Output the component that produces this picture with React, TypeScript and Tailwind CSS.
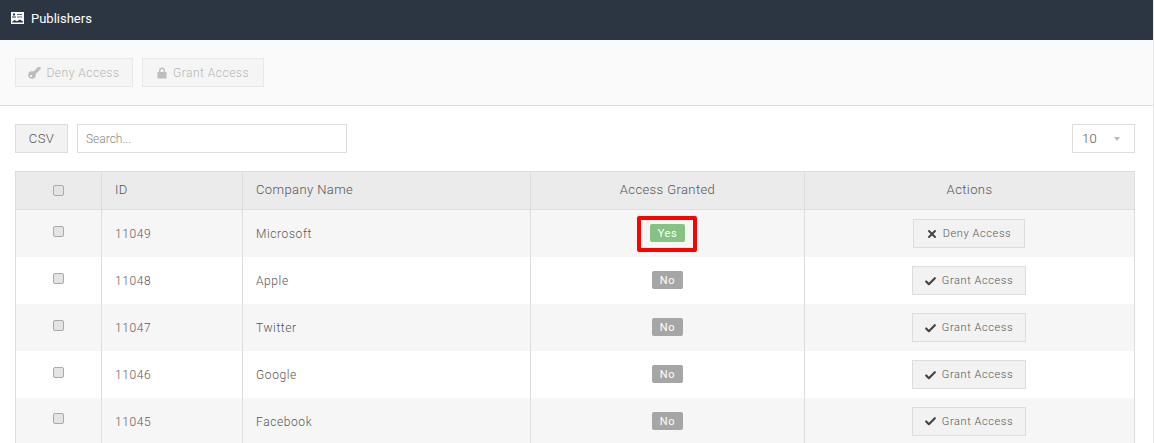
import { Check, X } from "lucide-react";

const rows = [
  { id: 11049, name: "Microsoft", granted: true },
  { id: 11048, name: "Apple", granted: false },
  { id: 11047, name: "Twitter", granted: false },
  { id: 11046, name: "Google", granted: false },
  { id: 11045, name: "Facebook", granted: false },
];

function PublisherIcon() {
  return (
    <svg width="13" height="12" viewBox="0 0 13 12" className="block">
      <rect x="0" y="0" width="13" height="12" fill="#fff" />
      <rect x="2" y="1.5" width="2" height="2" fill="#2c3643" />
      <rect x="6" y="2" width="5" height="1" fill="#5a6471" />
      <rect x="1" y="4.5" width="4" height="1" fill="#2c3643" />
      <rect x="6" y="4.5" width="5" height="1" fill="#5a6471" />
      <path d="M1 10 L3.5 8 L6 9.2 L9 7.5 L12 9.5 V10.5 H1 Z" fill="#2c3643" />
    </svg>
  );
}

function KeyIcon() {
  return (
    <svg width="13" height="13" viewBox="0 0 13 13" fill="#bdbdbd" className="block">
      <circle cx="4" cy="9" r="3.8" />
      <path d="M5 6 L10 1 H12.5 V3.5 L11.2 4 V5.2 L10 5.3 V6.5 L8.8 6.6 L7 8.5 Z" />
      <circle cx="3" cy="10" r="1" fill="#fafafa" />
    </svg>
  );
}

function LockIcon() {
  return (
    <svg width="10" height="12" viewBox="0 0 10 12" fill="#bdbdbd" className="block">
      <path
        fillRule="evenodd"
        d="M2 5V3.5C2 1.6 3.3.5 5 .5S8 1.6 8 3.5V5H9.5V11.5H.5V5H2ZM3.5 5H6.5V3.5C6.5 2.5 5.9 2 5 2S3.5 2.5 3.5 3.5V5Z"
      />
    </svg>
  );
}

export default function App() {
  return (
    <div className="h-[443px] overflow-hidden border-r border-[#e6e6e6] bg-white font-['Roboto',sans-serif] text-[13px] font-light tracking-[0.4px] text-[#555]">
      <div className="flex h-10 items-center gap-[7px] bg-[#2c3643] pb-[2px] pl-[11px] text-[13px] font-normal tracking-normal text-white">
        <span className="mb-[3px]">
          <PublisherIcon />
        </span>
        <span>Publishers</span>
      </div>

      <div className="flex h-[66px] items-start gap-[9px] border-b border-[#dddddd] bg-[#fafafa] pl-[15px] pt-[18px] text-[12px] tracking-[0.5px] text-[#b5b5b5]">
        <button className="flex h-[29px] w-[118px] items-center justify-center gap-[5px] border border-[#e8e8e8] bg-[#f5f5f5]">
          <KeyIcon />
          Deny Access
        </button>
        <button className="flex h-[29px] w-[122px] items-center justify-center gap-[6px] border border-[#e8e8e8] bg-[#f5f5f5]">
          <LockIcon />
          Grant Access
        </button>
      </div>

      <div className="flex items-start pl-[15px] pr-[18px] pt-[18px]">
        <button className="h-[29px] w-[53px] border border-[#dddddd] bg-[#f2f2f2]">CSV</button>
        <input
          placeholder="Search..."
          className="ml-[9px] h-[29px] w-[270px] border border-[#dddddd] bg-white px-2 text-[12px] tracking-normal outline-none placeholder:text-[#888]"
        />
        <div className="ml-auto flex h-[29px] w-[63px] items-center justify-between border border-[#dddddd] pl-[9px] pr-[14px]">
          10
          <span className="h-0 w-0 border-x-[3px] border-t-[4px] border-x-transparent border-t-[#bbb]" />
        </div>
      </div>

      <div className="pl-[15px] pr-[18px] pt-[18px]">
        <table className="w-[1120px] table-fixed border-collapse border border-[#dddddd]">
          <colgroup>
            <col className="w-[86px]" />
            <col className="w-[141px]" />
            <col className="w-[288px]" />
            <col className="w-[274px]" />
            <col />
          </colgroup>
          <thead>
            <tr className="h-[38px] border-b border-[#dddddd] bg-[#ebebeb] text-[13px]">
              <th className="border-r border-[#dddddd] pr-[1px] font-light">
                <input type="checkbox" className="mx-auto block h-[11px] w-[11px] appearance-none rounded-[2px] border border-[#aaa] bg-[#e4e4e4]" />
              </th>
              <th className="border-r border-[#dddddd] pb-[2px] pl-[13px] text-left font-light">ID</th>
              <th className="border-r border-[#dddddd] pb-[2px] pl-[13px] text-left font-light">Company Name</th>
              <th className="border-r border-[#dddddd] pb-[2px] text-center font-light">Access Granted</th>
              <th className="pb-[2px] text-center font-light">Actions</th>
            </tr>
          </thead>
          <tbody className="text-[12px] tracking-[0.6px]">
            {rows.map((r, i) => (
              <tr key={r.id} className={i % 2 === 0 ? "h-[47px] bg-[#f6f6f6]" : "h-[47px] bg-white"}>
                <td className="border-r border-[#dddddd] pr-[1px]">
                  <input type="checkbox" className="mx-auto mb-[4px] block h-[11px] w-[11px] appearance-none rounded-[2px] border border-[#aaa] bg-[#e4e4e4]" />
                </td>
                <td className="border-r border-[#dddddd] pl-[13px] pt-[2px] text-[#6b5458]">{r.id}</td>
                <td className="border-r border-[#dddddd] pl-[13px] pt-[2px]">{r.name}</td>
                <td className="border-r border-[#dddddd] text-center">
                  {r.granted ? (
                    <span className="relative mx-auto flex h-[18px] w-[35px] items-center justify-center rounded-[2px] bg-[#86c282] pt-[1px] text-[11px] font-normal text-white">
                      Yes
                      <span className="absolute -bottom-[10px] -left-[13px] -right-[12px] -top-[8px] rounded-[2px] border-4 border-[#ff0000]" />
                    </span>
                  ) : (
                    <span className="mx-auto flex h-[18px] w-[31px] items-center justify-center rounded-[2px] bg-[#a6a6a6] pt-[2px] text-[11px] font-normal text-white">
                      No
                    </span>
                  )}
                </td>
                <td className="pr-[2px] text-center">
                  <button
                    className={
                      (r.granted ? "w-[112px]" : "w-[114px]") +
                      " mx-auto flex h-[29px] items-center justify-center gap-[5px] border border-[#dddddd] bg-[#f2f2f2] pt-[1px] text-[11px] " +
                      (r.granted ? "" : "mt-[1px]")
                    }
                  >
                    {r.granted ? (
                      <X size={12} strokeWidth={4} className="text-[#444]" />
                    ) : (
                      <Check size={13} strokeWidth={4} className="text-[#444]" />
                    )}
                    {r.granted ? "Deny Access" : "Grant Access"}
                  </button>
                </td>
              </tr>
            ))}
          </tbody>
        </table>
      </div>
    </div>
  );
}
